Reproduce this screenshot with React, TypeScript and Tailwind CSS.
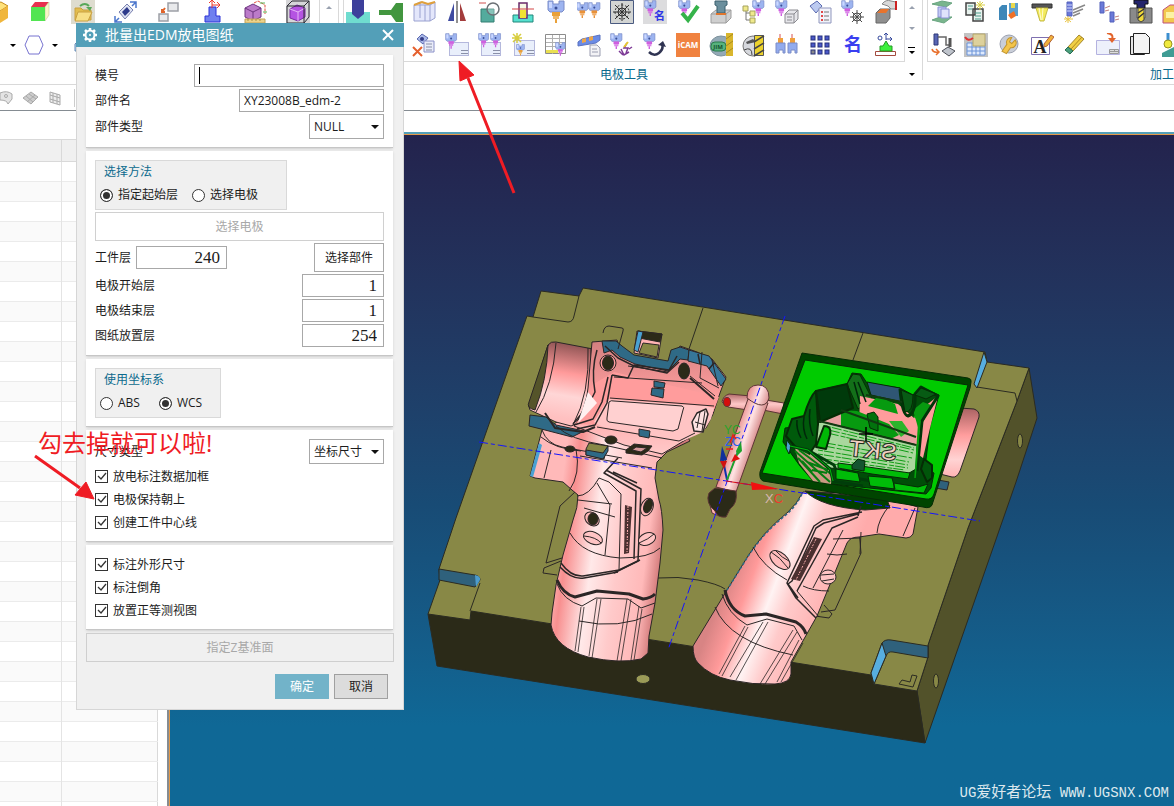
import React, { useState } from 'react';

type Draw = () => React.ReactNode;

interface ChuckProps {
    x?: number;
    y?: number;
    s?: number;
    tip?: string;
}

// Electrode holder, shared by most of the tool icons
const Chuck: React.FC<ChuckProps> = ({ x = 0, y = 0, s = 1, tip = '#cf5fe0' }) => (
    <g transform={`translate(${x} ${y}) scale(${s})`}>
        <path d="M1 1h5v3h6V1h5v9l-2 2H3l-2-2z" fill="#9db4f0" stroke="#7a8cc8" />
        <path d="M2 2h3v6H2z" fill="#cbd8ff" />
        <circle cx="9" cy="8" r="1.500" fill="#3b4f96" />
        <path d="M5 12h8v4H5z" fill={tip} />
        <path d="M6 16h6v3H6z" fill={tip} opacity=".75" />
        <path d="M8 19h2v4H8z" fill={tip} />
    </g>
);

const Sheet = ({ x = 8, y = 10, w = 15, h = 13 }) => (
    <g>
        <rect x={x + 0.5} y={y + 0.5} width={w - 1} height={h - 1} fill="#e9effb" stroke="#b4b8dc" />
        <path d={`M${x + w - 8} ${y + h - 5.5}h7M${x + w - 8} ${y + h - 2.5}h7`} stroke="#8a90a8" fill="none" />
    </g>
);

const leftIcons: Draw[] = [
    () => <><path d="M4 5l12-3 7 4-8 5z" fill="#ffe27a" stroke="#c58a1c" /><path d="M15 11l8-5v12l-8 5z" fill="#f0b63c" /><path d="M4 5l11 6v11L4 18z" fill="#ffcb4a" /></>,
    () => <><path d="M3 7l4-5h14l-4 5z" fill="#e8304f" /><path d="M17 7l4-5v13l-4 6z" fill="#f7f7c8" stroke="#b9b98a" strokeWidth=".5" /><path d="M3 7h14v14H3z" fill="#52e552" /></>,
    () => <><path d="M0 0h24v24H0z" fill="#dedccf" /><path d="M4 8h6l2 2h8v10H4z" fill="#e2bd4d" stroke="#c9a040" /><path d="M7 12h14l-4 9H4z" fill="#f7df86" stroke="#c9a040" /><path d="M9 6q5-4 9 0" stroke="#58a858" strokeWidth="2" fill="none" /><path d="M15 7h6l-2 4z" fill="#58a858" /></>,
    () => <><path d="M5 12l8-8 6 6-8 9z" fill="#dfe3f2" stroke="#7a82b0" /><path d="M8 12l5-5 3 4-5 5z" fill="#2d3a8a" /><path d="M16 2h6v6M22 2l-4 4M1 16v6h7M1 22l4-4" stroke="#4b76cc" strokeWidth="1.500" fill="none" /></>,
    () => <><path d="M11 3h10v8H11zM2 14h9v7H2z" fill="#e9eaec" stroke="#9da0a6" strokeWidth="1.500" /><path d="M8 8l-3 4M5 9v3h3" stroke="#e0642a" strokeWidth="2" fill="none" /></>,
    () => <><path d="M9 7h7v9h4v6H5v-6h4z" fill="#6f80ef" stroke="#2c32d8" /><path d="M12 8V1M12 5h8M9 3l3-3 3 3M17 2l3 3-3 3" stroke="#ee3a2a" fill="none" /></>,
    () => <><path d="M2 8l8-4 8 4v9l-8 4-8-4z" fill="#bb7bc9" stroke="#6d3480" /><path d="M2 8l8 4 8-4M10 12v9" stroke="#6d3480" fill="none" /><path d="M2 19h20v4H2z" fill="#ecd28a" stroke="#c0a358" /><path d="M5 19v2M9 19v2M13 19v2M17 19v2" stroke="#a89348" /><path d="M11 3l4-2 7 4v9" stroke="#e05040" fill="none" strokeDasharray="3 1" /><path d="M17 3h5M20 12h4" stroke="#59b959" /></>,
    () => <><path d="M0 0h24v24H0z" fill="#d6d6d8" /><path d="M4 9l7-4 8 3v9l-7 4-8-3z" fill="#b554e2" stroke="#7a2ba3" /><path d="M4 9l8 3 7-4M12 12v9" stroke="#e6b5f7" fill="none" /><path d="M1 6l5-5h17v16l-5 6H1zM1 6h17v17M18 6l5-5" stroke="#2b2b33" fill="none" /></>,
];

const toolIconsTop: Draw[] = [
    () => <><path d="M0 12h24v12H0z" fill="#6fdccf" /><path d="M6 0h12v14l-6 5-6-5z" fill="#3d3f9b" /></>,
    () => <><path d="M0 10h12l5-7h7v19h-7l-5-7H0z" fill="#42963f" /></>,
    () => <><path d="M2 5l6-3 8 2 7-2v16l-5 3H2z" fill="#e4e7fb" stroke="#9aa1d0" /><path d="M8 3v15M13 5v16M18 5v16M2 5h16l5-3" stroke="#9aa1d0" fill="none" /><path d="M2 5l8-3 6 2 7-2" stroke="#e0a03a" strokeWidth="2" fill="none" /></>,
    () => <><path d="M9 3v18H3z" fill="#3e4aa0" /><path d="M15 3v18h6z" fill="#a33c3c" /><path d="M12 1v22" stroke="#222" /></>,
    () => <><path d="M3 9h13v13H3z" fill="#53ab9d" stroke="#357e73" /><circle cx="15" cy="9" r="6" fill="#fff" fillOpacity=".3" stroke="#6b7075" strokeWidth="1.500" /><path d="M1 3h7" stroke="#d05050" /></>,
    () => <><path d="M2 15h20v7H2z" fill="#55e0cf" stroke="#23877a" /><path d="M8 3h8v15H8z" fill="#f8f9e4" stroke="#6a2a6a" strokeWidth="1.500" /><path d="M9 10h6v8H9z" fill="#f1e331" /><path d="M1 9h22" stroke="#d34545" /></>,
    () => <Chuck x={3} tip="#e9a13a" />,
    () => <><Chuck x={-1} y={2} s={0.7} tip="#e9923a" /><Chuck x={11} y={2} s={0.7} tip="#e9923a" /></>,
    () => <><path d="M.5.5h23v23H.5z" fill="#d2d4d3" stroke="#4a5a80" /><g stroke="#2e2e2e" fill="none"><circle cx="12" cy="12" r="4" /><circle cx="12" cy="12" r="7" strokeDasharray="2 2" /><path d="M12 3v18M3 12h18M5 5l14 14M19 5L5 19" /></g></>,
    () => <><path d="M0 0h24v24H0z" fill="#dcdcde" /><Chuck x={1} y={0} s={0.7} /><text x="11" y="20" fontSize="11" fontWeight="700" fill="#2f36e6">名</text></>,
    () => <><Chuck x={2} y={0} s={0.7} /><path d="M6 13l6 7L22 6" stroke="#35b34a" strokeWidth="4" fill="none" /></>,
    () => <><path d="M2 14l5-4h15v8l-5 5H2z" fill="#cfcfcf" stroke="#9d9d9d" /><path d="M2 14h15v9M17 14l5-4" stroke="#9d9d9d" fill="none" /><path d="M6 1h12v4l-2 1v7H8V6L6 5z" fill="#6b8f9d" stroke="#3d616e" /><path d="M7 14h10" stroke="#e0762d" strokeWidth="2" /></>,
    () => <><Chuck x={10} y={0} s={0.7} /><path d="M4 8v12M4 13h5M4 20h5" stroke="#777" fill="none" /><path d="M1 6h5v5H1zM8 11h5v5H8zM8 18h5v5H8z" fill="#efe98c" stroke="#a5a25c" /></>,
    () => <><Chuck x={0} y={0} s={0.7} /><path d="M10 14l4-4h9v9l-4 4h-9z" fill="#e6e6ea" stroke="#8b8b91" /><path d="M10 14h9v9M19 14l4-4M12 17h5M12 20h5" stroke="#8b8b91" fill="none" /></>,
    () => <><path d="M2 6l7-5 5 5-6 7z" fill="#bccaf0" stroke="#5c6bb0" /><path d="M11 8h12v15H11z" fill="#f2f3fa" stroke="#8f96bd" /><path d="M13 12h2M13 16h2M13 20h2" stroke="#e04848" strokeWidth="2" /><path d="M16 12h5M16 16h5M16 20h5" stroke="#777" /></>,
    () => <><Chuck x={0} y={0} s={0.7} /><g stroke="#4a4a4a" fill="none"><circle cx="16" cy="17" r="4" /><path d="M16 10v14M9 17h14M11 12l10 10M21 12L11 22" /></g></>,
    () => <><path d="M2 13l4-4h10v9l-4 5H2z" fill="#8f8f8f" stroke="#666" /><path d="M3 13l4-4h8l-3 4z" fill="#e8732c" /><path d="M8 4q4-5 9-3l5 1v7h-5l-3-3z" fill="#d9d9d9" stroke="#888" /><path d="M22 1v9" stroke="#c22" strokeWidth="2" /></>,
];

const toolIconsBottom: Draw[] = [
    () => null,
    () => null,
    () => <><path d="M5 6l5-5 6 4-5 6z" fill="#a9b8e8" stroke="#5c6bb0" /><circle cx="10" cy="6" r="2" fill="#333c86" /><path d="M12 8h10v11H12z" fill="#e9ecf8" stroke="#8a90c8" /><path d="M14 11h6M14 14h6M14 17h6" stroke="#8a90a8" /><path d="M1 14l9 9M10 14l-9 9" stroke="#e5602e" strokeWidth="2" /></>,
    () => <><Sheet x={4} y={9} w={20} h={14} /><Chuck x={0} y={0} s={0.68} /></>,
    () => <><Sheet x={3} y={9} w={20} h={14} /><Chuck x={0} y={0} s={0.62} /><Chuck x={12} y={0} s={0.62} /></>,
    () => <><Sheet x={3} y={7} w={21} h={16} /><Chuck x={5} y={11} s={0.5} tip="#e9a13a" /><path d="M6 0v10M1 5h10M2 1l8 8M10 1L2 9" stroke="#d7cd3e" strokeWidth="1.500" /></>,
    () => <><path d="M1.500 1.500h20v19h-20z" fill="#fff" stroke="#8c8c8c" /><path d="M2 5.500h19M2 9.500h19M2 13.500h19M8.500 2v19M15.500 2v19" stroke="#b0b0b0" /><path d="M2 17h12v3H2z" fill="#e9df51" /><Chuck x={11} y={9} s={0.6} /></>,
    () => <><path d="M1 9l4-3 18-4v5l-4 3L1 13z" fill="#6a8be6" stroke="#5a72c0" /><path d="M5 6l4-1v4l-4 1zM12 4l4-1v4l-4 1z" fill="#eda648" /><path d="M13 12h7l3 3v8H13z" fill="#f3f3f6" stroke="#9a9db0" /><path d="M15 16h5M15 19h6" stroke="#9a9db0" /></>,
    () => <><Chuck x={0} y={0} s={0.7} /><path d="M9 18l4 4M11 16l3 6 5-3M17 10l-3 5h4l-2 5M19 16l3-2" stroke="#7d3a96" strokeWidth="1.500" fill="none" /><path d="M18 9l-4 5" stroke="#e9c92e" strokeWidth="2" /></>,
    () => <><Chuck x={0} y={0} s={0.7} /><path d="M6 19q5 5 10 1t3-9" stroke="#303452" strokeWidth="2.500" fill="none" /><path d="M15 12l5-4 3 6z" fill="#303452" /></>,
    () => <><path d="M0 0h24v24H0z" fill="#f08240" /><text x="12" y="15" fontSize="8" fontWeight="700" fill="#fff" textAnchor="middle">iCAM</text></>,
    () => <><ellipse cx="12" cy="13" rx="11" ry="10" fill="#93a9b6" stroke="#7c919c" /><rect x="2" y="9" width="15" height="9" rx="4" fill="#57b27e" stroke="#2b7d4d" /><text x="9" y="16" fontSize="6" fontWeight="700" fill="#14532d" textAnchor="middle">JIM</text><path d="M17 0h7v23h-7z" fill="#d9b62d" /><path d="M17 6l7-5M17 13l7-5M17 20l7-5" stroke="#a98a1c" /></>,
    () => <><ellipse cx="11" cy="13" rx="10" ry="10" fill="#d6d8dd" stroke="#777" /><path d="M2 17q8-4 8 5" stroke="#444" fill="none" /><path d="M4 9l7-3 3 3-9 2z" fill="#555" /><path d="M12.500 2.500h9v20h-9z" fill="#ecd22c" stroke="#555" /><path d="M12 9l10-6M12 16l10-6M12 23l10-6" stroke="#444" strokeWidth="1.500" /></>,
    () => <><path d="M5 1v6M17 1v6" stroke="#d85050" /><path d="M3 5h5v5H3zM15 5h5v5h-5z" fill="#efa03c" /><path d="M1 10h9v10H8v-3H4v3H1zM13 10h9v10h-2v-3h-4v3h-3z" fill="#92abee" stroke="#7a8cc8" /></>,
    () => <><g fill="#4a58c8" stroke="#27307d">{[3, 10, 17].map((x) => [3, 10, 17].map((y) => <rect key={`${x}-${y}`} x={x} y={y} width="4" height="4" fill={x === 3 && y === 17 ? '#888' : '#4a58c8'} />))}</g></>,
    () => <text x="12" y="18" fontSize="18" fontWeight="700" fill="#3a3ff0" textAnchor="middle">名</text>,
    () => <><path d="M1.500 18.500h20v4h-20z" fill="#fff" stroke="#a34a3e" /><path d="M6 18v-5h3l3-5 3 5h3v5z" fill="#3cf03c" stroke="#249a24" /><path d="M12 7V1M12 6h6M10 2l2-2 2 2M16 4l2 2-2 2" stroke="#35499c" fill="none" /><circle cx="6" cy="5" r="2" fill="none" stroke="#35499c" /></>,
];

const camIconsTop: Draw[] = [
    () => <><path d="M1 4l10-3 10 2-6 4zM1 20l8-3h12l-8 6z" fill="#79b58d" stroke="#6aa581" /><path d="M7 7h8v10H7z" fill="#c3c9f5" stroke="#8a91d4" /><path d="M10 9h8v9h-8z" fill="#dfe2fb" stroke="#8a91d4" /></>,
    () => <><path d="M2 3h9v12H2zM9 9h10v12H9z" fill="#e8f2ee" stroke="#444" strokeWidth="1.500" /><path d="M4 6h5M4 9h4M11 13h6M11 16h6M11 19h6" stroke="#4b9a8a" /><path d="M16 1v9M12 5h9M13 2l6 6M19 2l-6 6" stroke="#d9cf45" /></>,
    () => <><path d="M2 8l3-3h5v15H2z" fill="#3e87b8" /><path d="M12 3h9v13h-9z" fill="#5b9fce" /><path d="M14 3h4v5h-4z" fill="#e9d84c" /><path d="M11 15l6-4 2 5-5 3z" fill="#f07026" /></>,
    () => <><path d="M2 4h20v4H2z" fill="#555" stroke="#333" /><path d="M6 8h12l-4 13h-4z" fill="#f3ea5c" stroke="#c5bb45" /><path d="M9 8l2 12M13 8l-1 12" stroke="#fffbd0" /></>,
    () => <><path d="M4 2h5v14H4z" fill="#6b79d8" stroke="#5260bb" /><path d="M4 5h5M4 8h5M4 11h5" stroke="#d3d9fb" /><path d="M10 10l12-5M10 13l10-4M10 16l7-3" stroke="#888" strokeWidth="1.500" /><path d="M5 16v7M1 19h9M2 17l6 5M8 17l-6 5" stroke="#e9c545" /></>,
    () => <><path d="M4 2h4v11H4zM14 12h4v10h-4z" fill="#6b79d8" stroke="#5260bb" /><path d="M9 8l5-2M9 11l4-1M19 17l4-1M19 20l4-1" stroke="#c08080" /></>,
    () => <><path d="M1 8h7v10h8V8h7v15H1z" fill="#8a8a8a" stroke="#555" /><path d="M5 0h14v4h-3v4H8V4H5z" fill="#23246c" stroke="#111" /><path d="M9 8h6v12l-3 2-3-2z" fill="#efd93a" stroke="#444" /><path d="M9 13l6-4M9 18l6-5" stroke="#333" strokeWidth="1.500" /></>,
    () => <><path d="M1 10l7-5h16v10l-8 8H1z" fill="#f2c84e" stroke="#c0507c" /><path d="M4 12h14v6H4z" fill="#fbf2a4" /></>,
];

const camIconsBottom: Draw[] = [
    () => <><path d="M3 1h4v11H3z" fill="#5866b4" stroke="#2f3978" /><path d="M7 4h8v8h5" stroke="#666" fill="none" strokeWidth="1.500" /><path d="M11 18l6-4 7 4-6 5z" fill="#bfc4cc" stroke="#4b4e56" /><path d="M19 5v9" stroke="#555" strokeWidth="3" /><path d="M1 16q1 4 6 3M5 16l3 3-3 3" stroke="#e8702d" strokeWidth="1.500" fill="none" /></>,
    () => <><path d="M0 0h24v24H0z" fill="#c3c3c3" /><path d="M3 10h18v12H3z" fill="#dfeafc" stroke="#6a93d8" /><path d="M3 14h18M3 18h18M8 10v12M12 10v12M16 10v12" stroke="#6a93d8" /><path d="M9 1h12v12H9z" fill="#ddd19c" stroke="#b5a66a" /><path d="M1 4q3 5 8 1" stroke="#d33" strokeWidth="2" fill="none" /></>,
    () => <><circle cx="12" cy="11" r="9" fill="#c9ced8" stroke="#9ca1b0" /><path d="M8 5a5 5 0 017 6l5 5-3 4-6-6a5 5 0 01-6-6l4 3 2-2z" fill="#f4c54a" stroke="#c3962f" transform="rotate(80 12 12)" /></>,
    () => <><path d="M1.500 4.500h18v17h-18z" fill="#fff" stroke="#7f70b0" /><text x="10" y="20" fontSize="18" fontWeight="700" fill="#222" textAnchor="middle" fontFamily="Liberation Serif">A</text><path d="M14 11l7-9 3 2-7 9-3 1z" fill="#f0b23a" stroke="#b3643a" /></>,
    () => <><path d="M5 14L16 2l5 4L10 18z" fill="#f0cf45" stroke="#a5872c" /><path d="M8 16L19 4" stroke="#b18b1f" /><path d="M5 14l5 4-3 3-5-4z" fill="#4aa07d" stroke="#266b50" /></>,
    () => <><path d="M.5 7.500h23v14H.5z" fill="#edf0fb" stroke="#b4b2e0" /><path d="M13.500 16.500h9v4h-9zM14 18.500h9M18.500 17v2" fill="#ddd" stroke="#999" /><path d="M11 0q7 1 5 6" stroke="#e2642c" strokeWidth="2" fill="none" /><path d="M12 5h8l-4 5z" fill="#e2642c" /></>,
    () => <><path d="M1.500 3.500h14v18h-14z" fill="#e5e5e5" stroke="#222" /><path d="M4.500.5h12l4 4v16h-16z" fill="#f4f4f4" stroke="#222" /></>,
    () => <><path d="M6 0v8" stroke="#3c8fd0" strokeWidth="3" /><circle cx="6" cy="11" r="4" fill="#f0ea3e" stroke="#999320" /><path d="M0 20l12-6V8l12-4v20H0z" fill="#3f9c94" /></>,
];

const IconButton: React.FC<{ draw: Draw; label: string }> = ({ draw, label }) => (
    <button type="button" aria-label={label} className="h-6 w-6 shrink-0">
        <svg viewBox="0 0 24 24" className="h-6 w-6">{draw()}</svg>
    </button>
);

const IconRow: React.FC<{ icons: Draw[]; name: string; wide?: boolean }> = ({ icons, name, wide }) => (
    <div className={`flex h-6 ${wide ? 'gap-[19px]' : 'gap-[9px]'}`}>
        {icons.map((draw, i) => <IconButton key={i} draw={draw} label={`${name} ${i + 1}`} />)}
    </div>
);

const Caret: React.FC<{ className?: string; up?: boolean }> = ({ className = 'h-[3px] w-[6px] text-black', up }) => (
    <svg viewBox="0 0 8 4" className={className}><path d={up ? 'M0 4h8L4 0z' : 'M0 0h8L4 4z'} fill="currentColor" /></svg>
);

const Ribbon = () => (
    <header className="flex h-[85px] overflow-hidden border-b border-[#d9d9d9]">
        <div className="flex w-[343px] shrink-0 flex-col">
            <div className="flex h-[62px] border-b border-[#d9d9d9]">
                <div className="w-[319px] shrink-0 overflow-hidden">
                    <div className="-ml-[15px]"><IconRow icons={leftIcons} name="View" wide /></div>
                    <div className="mt-[9px] flex h-6 items-center gap-2 pl-[10px]">
                        <Caret />
                        <svg viewBox="0 0 20 20" className="h-5 w-5"><path d="M5 1h10l4 9-4 9H5l-4-9z" fill="#fff" stroke="#7773d0" /></svg>
                        <Caret />
                        <svg viewBox="0 0 20 20" className="ml-2 h-5 w-5"><path d="M1 9l5-5h12v12H1z" fill="#b9d3ee" stroke="#6289b4" /></svg>
                    </div>
                </div>
                <div className="flex w-5 justify-center border-x border-[#d9d9d9] pt-[6px]"><Caret up className="h-[3px] w-[6px] text-gray-400" /></div>
            </div>
        </div>
        <div className="flex w-[562px] shrink-0 flex-col">
            <div className="flex h-[62px] flex-col gap-[9px] border-x border-b border-[#d9d9d9] pl-[2px]">
                <IconRow icons={toolIconsTop} name="Electrode" />
                <IconRow icons={toolIconsBottom} name="Electrode setup" />
            </div>
            <div className="pt-[4px] text-center text-[12px] leading-[18px] text-[#0b6a8d]">电极工具</div>
        </div>
        <div className="mb-1 flex w-[18px] shrink-0 flex-col items-center border-r border-[#d9d9d9] pr-[4px] pt-[6px]">
            <Caret up className="h-[3px] w-[6px] text-gray-400" />
            <Caret className="mt-[18px] h-[3px] w-[6px] text-gray-400" />
            <div className="mt-[17px] flex flex-col items-center gap-[3px]"><span className="h-px w-[7px] bg-black" /><Caret /></div>
            <Caret className="mt-[19px] h-[3px] w-[6px] text-black" />
        </div>
        <div className="ml-1 min-w-0 flex-1 overflow-hidden">
            <div className="flex h-[62px] flex-col gap-[9px] overflow-hidden border-b border-l border-[#d9d9d9] pl-[3px]">
                <IconRow icons={camIconsTop} name="Machining" />
                <IconRow icons={camIconsBottom} name="Machining setup" />
            </div>
            <div className="pt-[4px] text-right text-[12px] leading-[18px] text-[#0b6a8d]">加工</div>
        </div>
    </header>
);

const ViewBar = () => (
    <div className="flex h-[26px] items-center gap-2 border-b border-[#858c92]">
        <svg viewBox="0 0 66 16" className="h-4 w-[66px]" fill="#e4e4e4" stroke="#aaa">
            <path d="M0 3q7-3 12 1v5l-4 5q-1-4-8-4z" /><circle cx="6" cy="6" r="1.500" />
            <path d="M23 8l8-6 7 5-7 7z" fill="#ccc" /><path d="M26 6l7 6M29 4l7 5M35 5l-8 7" />
            <path d="M50 2l10 3v10l-10-3zM53 3v10M57 4v10M50 5l10 3M50 9l10 3" fill="#eee" />
        </svg>
        <span className="h-[18px] w-px bg-[#ccc]" />
    </div>
);

const LayerTable = () => (
    <table className="w-[158px] table-fixed border-collapse border-y border-r border-[#d9d9d9]">
        <thead>
            <tr className="h-[22px] border-b border-[#d9d9d9] bg-[#f0f0f0]">
                <th className="w-[61px] border-r border-[#d9d9d9]" /><th />
            </tr>
        </thead>
        <tbody>
            {Array.from({ length: 40 }, (_, i) => (
                <tr key={i} className="h-5 border-b border-[#ebebeb] even:bg-[#fafafa]">
                    <td className="border-r border-[#e4e4e4]" /><td />
                </tr>
            ))}
        </tbody>
    </table>
);

const Plate = () => (
    <g stroke="#2b2b22" strokeWidth="1">
        <path d="M1029 368L1037 418 1016 482 925 743 917 691 928 657 928 645 968 528 1017 401z" fill="#52522a" />
        <path d="M428 614L437 666 925 743 917 691 874 684 871 670 471 605z" fill="#2b2a18" />
        <path d="M541 291L579 296 583 288 985 352 987 362 1029 368 1017 401 968 528 928 645 928 657 917 691 874 684 871 675 471 611 470 620 428 614 440 580 439 569 456 518 527 316 533 317z" fill="#888846" />
        <path d="M533 317l35 5q5 0 6-6l5-20M703 308l-14 41M863 333l-10 27M977 387l38 6 2 8" fill="none" />
        <path d="M984 352l3 10-10 26-3-4z" fill="#57aee0" />
        <path d="M439 569l36 6q5 1 5 5l-5 7-36-7z" fill="#2f617c" />
        <path d="M475 575q6 1 5 5l-4 7z" fill="#4d9ccc" stroke="none" />
        <path d="M480 583l-10 28" fill="none" />
        <path d="M882 643q3-4 9-3l37 6v12l-35-6q-5-1-7 4l-12 28-3-11z" fill="#2f617c" />
        <path d="M882 643l4 13-12 28-3-11z" fill="#57aee0" />
        <path d="M899 684l3-4 8 2 2-7 5 1-4 11z" fill="none" />
        <ellipse cx="1020" cy="441" rx="2.500" ry="7" fill="#888846" />
        <ellipse cx="936" cy="681" rx="2.500" ry="7" fill="#888846" />
        <ellipse cx="643" cy="679" rx="7" ry="4.500" fill="#9b9b57" />
        <path d="M658 578q20-2 40 2t27 9" fill="none" />
    </g>
);

const LeftGun = () => (
    <g stroke="#2b2626" strokeWidth="1" strokeLinejoin="round">
        <path d="M575 492l-15 14-14 57 16-5M544 568l17-7M544 568l-1 5 14 2" fill="none" />
        {/* grip and base */}
        <path d="M542 430L530 476 535 478 563 482 572 490 578 495Q578 508 573 520L563 555 556 585 552 613 551 625Q555 648 588 657 620 664 641 659L648 653 649 636 655 603 660 563 663 530Q662 508 659 500L655 478 657 462 667 452 690 441 670 410 600 400z" fill="url(#grip)" />
        {/* barrel */}
        <path d="M548 345q3-4 8-3l37 7-5 60q-8 15-17 17l-15-4-26-12q-2-3 0-7z" fill="url(#barrel)" />
        <path d="M548 345q-1 35-13 65-9-2-6-8z" fill="#55542a" />
        <path d="M556 343q-3 42-20 69M588 348q2 45-15 77M591 349q3 45-16 77" fill="none" />
        {/* slide */}
        <path d="M592 342l25-2 4 12 16 8 32 5 5-8 6-11 17 6 15 7 14 18-6 16-7 21-7 14-24 14-20 12-38-9-50-19q12-14 14-38z" fill="url(#slide)" />
        <path d="M592 385l22-13 105 25-7 18-101-10-15 20-21-1q16-16 17-39z" fill="#ff9c9c" stroke="none" />
        <path d="M608 399l98 7 8 2-3 11-8 13-20 9-80-14-9-5z" fill="#ffc4c4" stroke="none" />
        <path d="M610 398l104 8M614 377l88 6M597 427l82 14 16-8" fill="none" />
        <path d="M602 341L616 341 622 346 634 355 668 361 671 350 680 347 689 350 688 360 680 359 668 371 635 364 620 357 612 350 604 353z" fill="#2f6a86" />
        <path d="M689 350L709 356 726 379 721 386 707 366 688 361z" fill="#36779a" />
        <path d="M605 346L618 358 634 366 667 373 679 362M698 354l2 10M714 363l-5 6" fill="none" strokeWidth="1.500" />
        <path d="M603 333q1-7 6-7l13 2q2 0 1 3l-5 18" fill="none" />
        <path d="M637 331L662 334 658 358 634 353z" fill="#ffb4b4" />
        <path d="M638 331L662 334 660 342 639 338z" fill="#2b2a18" />
        <path d="M638 331l5 1-5 20-4-2z" fill="#4aa1d2" />
        <path d="M643 343l16 2-2 12-18-4z" fill="#888846" />
        <path d="M597 350q-6 20-2 42l-7 14-15 18M612 375l16 3 6-13 35 5 8-14M612 375l-5 28-12 22-18 4M608 377l-6 25-9 17-19 6" fill="none" strokeWidth="1.500" />
        <path d="M588 392l9 11-12 13-7 7z" fill="#fff0f0" stroke="none" />
        <path d="M609 402q2-2 5-1l68 5q3 1 1 4l-5 19-5 2-64-9q-3-1-2-4z" fill="#ffd0d0" />
        <circle cx="608" cy="363" r="8" fill="#ff9c9c" /><ellipse cx="608" cy="363" rx="5.500" ry="7" fill="#2b2a18" />
        <ellipse cx="684" cy="371" rx="5.500" ry="8" fill="#2b2a18" />
        <path d="M702 352l-2 26 19 10M690 376l25 20M712 360l6 26M628 366l40 6" fill="none" />
        <path d="M690 378l24 21" fill="none" strokeWidth="2" />
        <path d="M654 381l11 2-1 5-10-1zM652 388l12 1-1 9-12-3z" fill="#2f6a86" />
        <path d="M639 429l11 2-1 7-10-2z" fill="#2f6a86" />
        <path d="M697 413l9-4 2 5-5 18-9-1-2-9z" fill="#ffe2e2" strokeWidth="1.500" />
        <path d="M700 412l-3 16M705 411l-3 20M695 422l10 3" fill="none" />
        {/* trigger guard */}
        <path d="M530 415l16 2 10 8 28 6-12 6-27-7-16-4z" fill="#2f6a86" />
        <path d="M545 413l10 15 28 4 12-5" fill="none" strokeWidth="2" />
        <path d="M539 443l3 2-9 32-3-1z" fill="#4aa1d2" stroke="none" />
        <path d="M556 426q15 14 48 19l58 13M542 430q5 14 20 17l60 11M551 450l-7 28M576 449q5 25-7 42M580 456l72 12M541 437q14 12 40 14" fill="none" />
        <path d="M586 449l3-6 19 3-3 9-1 4-18-4z" fill="#888846" />
        <path d="M586 450l17 3 5-7v5l-5 8-17-4z" fill="#2f6a86" />
        <ellipse cx="611" cy="440" rx="6" ry="4" fill="#2b2a18" /><ellipse cx="570" cy="449" rx="5" ry="3" fill="#2b2a18" />
        <path d="M626 450l8-6 18 2-4 5-6 4-16-2z" fill="#2b2a18" /><path d="M632 450l4-3 11 1-6 4z" fill="#d59a9a" />
        <path d="M618 458l-14 15 32 18-2 68M606 470l35 19-3 72-24 12M613 472l24 11" fill="none" strokeWidth="1.500" />
        <path d="M577 496q12 0 22-18l10 4 12 12-2 76M597 483l13 22-5 50M578 500l34 4M584 508l31 9" fill="none" />
        <path d="M625 505l7 2-3 46-5 1z" fill="#4b3030" stroke="none" /><path d="M628 506l-1 47" stroke="#ffb0b0" strokeDasharray="2 1 1 2" />
        <ellipse cx="592" cy="519" rx="8" ry="6" fill="#ffb5b5" transform="rotate(40 592 519)" /><ellipse cx="593" cy="519" rx="5" ry="6" fill="#2b2a18" />
        <ellipse cx="647" cy="507" rx="6" ry="9" fill="#ffb5b5" transform="rotate(20 647 507)" /><ellipse cx="648" cy="506" rx="4" ry="7" fill="#2b2a18" transform="rotate(20 648 506)" />
        <ellipse cx="593" cy="538" rx="10" ry="6" fill="#ffc4c4" transform="rotate(22 593 538)" /><path d="M584 536q12 1 17 7" fill="none" />
        <ellipse cx="647" cy="539" rx="9" ry="6" fill="#ffc4c4" transform="rotate(-22 647 539)" /><path d="M639 543q10-4 15-9" fill="none" />
        <path d="M570 533q12 22 50 25 30 0 40-10" fill="none" />
        <path d="M561 563q10 14 22 13l36-6 21-10M560 567q12 13 24 11l34-6" fill="none" strokeWidth="1.500" />
        <path d="M557 580q6 14 18 17l22-6 32 3 14 5q8-1 12-5" fill="none" strokeWidth="3" />
        <path d="M557 584q6 16 25 22l14-8 32 1 13 9 14-5M579 621q40 9 73-7" fill="none" />
        <path d="M581 607l-6 44M584 607l-6 45M597 599l-8 57M601 599l-9 59M627 599l-10 62M631 599l-10 62M639 606l-8 54M642 609l-8 51" fill="none" strokeWidth=".8" />
    </g>
);

const Rod = () => (
    <g stroke="#5c3535" strokeWidth="1">
        <path d="M729 394q-6 2-7 8l6 5 20 3 3-14zM766 400l18 3-1 11-20-4z" fill="url(#bar)" />
        <ellipse cx="727" cy="402" rx="3.500" ry="4.500" fill="#d40d0d" />
        <path d="M748 399l-32 88 20 5 32-89z" fill="url(#rod)" />
        <path d="M747 398q0-13 11-13t11 13q-4 14-22 0z" fill="url(#rod)" />
        <path d="M710 505l2 8q8 5 13-1l2-10z" fill="#ffb0b0" />
        <path d="M715 488l21 3q2 12-6 18l-4 8q-9 1-11-6-10-8-6-18z" fill="#2b2a18" />
    </g>
);

const RightGun = () => (
    <g stroke="#2b2626" strokeWidth="1" strokeLinejoin="round">
        <path d="M858 518l3 35-26 57-14 2M824 605l8 9-3 4-14-2" fill="none" />
        <path d="M945 407l29 2q6 2 5 8l-19 54q-3 7-8 6l-16-4z" fill="url(#cyl)" />
        <path d="M938 480l11 2-2 8-12-2z" fill="#2f617c" />
        <path d="M803 492q-6 12-15 20-25 20-40 44l-21 34-34 56q0 12 5 17 12 13 32 17 23 5 45 4 15-1 16-10v-12l26-46 30-73q3-6 12-6l20-3 27 4q5 0 7-4l5-27-50-14z" fill="url(#grip2)" />
        <path d="M805 491q16 16 60 19l25-2-3-9z" fill="#003f00" />
        <path d="M802 494q-6 12-15 20-25 20-40 44l-20 32" stroke="#2f6a86" strokeWidth="1.500" strokeDasharray="3 2" fill="none" />
        <path d="M862 512l-39 8-9 6-27 57 9 15 20 20M858 514l-34 9-8 5-24 53-4 3 10 14M858 517l-26 11-5 9-30 54M861 506l-3 10" fill="none" strokeWidth="1.500" />
        <path d="M814 537l8 2-22 42-9-2z" fill="#4b3030" stroke="none" /><path d="M816 539l-20 41" stroke="#ffb0b0" strokeDasharray="2 1 1 2" />
        <path d="M843 530l-30 58M833 539l27-1M827 554q10 2 20 0M753 547q10 20 34 33M803 586q10 5 26 5M861 532l-1 22M890 505q-12 14-13 28M915 508l-12 28M797 591l22 26" fill="none" />
        <ellipse cx="780" cy="560" rx="12" ry="7" fill="#ffbcbc" transform="rotate(42 780 560)" /><path d="M771 552q9 5 17 16M776 551q6 7 13 10" fill="none" />
        <ellipse cx="828" cy="577" rx="8" ry="7" fill="#ffc4c4" /><path d="M821 575l13-1M822 581l12-2" fill="none" />
        <path d="M725 590q4 20 20 26l21-2 30 8q8 5 10 12" fill="none" strokeWidth="3" />
        <path d="M722 594q6 20 25 31l20-6 27 7 8 14M715 607q14 35 78 48" fill="none" />
        <path d="M745 626l-26 48M748 627l-26 49M763 622l-33 55M768 622l-32 58M793 630l-33 54M797 632l-32 52M799 640l-22 42M803 643l-22 39" fill="none" strokeWidth=".8" />
    </g>
);

const Electrode = () => (
    <g stroke="#052b05" strokeWidth="1" strokeLinejoin="round">
        <path d="M802 353l166 25q4 1 3 4l-1 6-38 117q-2 4-9 2l-160-26q-4-2-3-9z" fill="#004400" />
        <path d="M805 360l163 25-34 109q-2 6-8 5l-164-26z" fill="#00cb00" />
        <path d="M815 391l32-7 5-11 9 1 6 9 33 5 13 7 8-8 18 8-9 31-5 42 9 5-3 15-5 6-66-7-46-5-14-16-17-24 2-14 16-2 8-5z" fill="#004d08" />
        <path d="M853 374l7 1 12 24-14 10-11-25z" fill="#137019" />
        <path d="M867 382l33 6 2 14-31-7z" fill="#2f5674" />
        <path d="M860 396l38 8 16 14 6-8 18-14-8 32-7 30-24-18-40-12z" fill="#ff9c9c" stroke="none" />
        <path d="M819 421l23-11 30 12 44 15-2 26-94-20z" fill="#e9a2a2" stroke="none" />
        <path d="M841 410l16 1 32 13 10 11-15 7-43-13zM878 396l17 8 3 10-30-8zM913 410l10-8 8 3-12 26zM905 443l11 2-1 15-12-1z" fill="#079a10" stroke="none" />
        <path d="M889 421l13 0 7 10-8 6z" fill="#2cb42c" stroke="none" />
        <path d="M819 421l98 24-1 24-12 7-83-9-13-8z" fill="#a9d79d" />
        <g stroke="#0e9b14" strokeWidth="1" fill="none" strokeDasharray="5 1 10 2">
            <path d="M826 426l88 22M824 429l90 21M823 432l90 21M820 442l92 16M819 445l90 17M818 450l90 15M818 454l90 14M816 458l89 12M824 463l80 10" />
        </g>
        <path d="M792 419l12-3q6-20 12-25l2 33-2 20-10 15-20-23z" fill="#005a0b" strokeWidth="2" />
        <path d="M816 391l31-7 6 24-33 14z" fill="#003a0b" strokeWidth="2" />
        <path d="M804 417q-2 12 3 22M810 409q-2 15 3 27M797 420q-1 9 4 18M858 382l8 20M854 382l6 22" stroke="#00270a" fill="none" strokeWidth="1.500" />
        <path d="M816 447l8-21q8 0 6 9l-4 14z" fill="#00b806" strokeWidth="2" />
        <path d="M787 440l4 6-2 8-3-6z" fill="#4da0cf" />
        <path d="M795 448l17 8 20 16-1 12-18-3-14-18z" fill="#c99a82" stroke="none" />
        <path d="M795 451l35 31M799 450l32 24M798 458l22 24M807 462l21 8M812 470l15 3M802 461l10 11" stroke="#047d10" strokeWidth="2" fill="none" />
        <path d="M790 446l18 4 22 19 3 12 30 5M806 449l28 16 4 10 28 5 50 9" stroke="#003d0a" strokeWidth="3" fill="none" />
        <path d="M790 446l18 4 22 19 3 12" stroke="#00b90b" strokeWidth="1" fill="none" />
        <path d="M836 469l22 4 2 9-24-3zM868 476l24 2 3 11-25-3zM894 483l24 4 10-3-4 9-30-3zM838 463l30 4 42 6-2 6-36-5-34-6z" fill="#00bc08" />
        <path d="M900 389q2 26 8 27 8-3 7-22l6-7 17 9-16 25-5 50" stroke="#003508" strokeWidth="3" fill="none" />
        <path d="M901 390l12 5q0 18-8 17zM915 395l6-7 15 6-10 5z" fill="#075b14" />
        <path d="M914 416l6 5-5 57M919 420l-4 58" fill="none" stroke="#04a30c" strokeWidth="1.500" />
        <path d="M924 459l8 6v13l-5 4-6-13z" fill="#00560a" strokeWidth="2" />
        <path d="M867 414l7-2 4 5v14l-8-3z" fill="#02720d" />
        <path d="M852 465l6-6 7 2-1 10-12-2z" fill="#14542f" />
        <path d="M819 421l97 24M841 410l75 27M866 395l36 7" stroke="#113a11" strokeWidth="2" fill="none" />
        <text transform="translate(896 461) scale(-1 1) rotate(-6)" fontFamily="Liberation Sans" fontWeight="700" fontSize="24" fill="#f3cfc4" stroke="#1a301a">SKT</text>
    </g>
);

const MoldModel = () => (
    <svg viewBox="170 135 1004 671" className="absolute left-0 top-0 h-[671px] w-[1004px]" aria-label="Mold model">
        <defs>
            <linearGradient id="grip" gradientUnits="userSpaceOnUse" x1="552" y1="560" x2="660" y2="574">
                <stop offset="0" stopColor="#ffb9b9" /><stop offset=".12" stopColor="#f88f8f" /><stop offset=".36" stopColor="#ffe9e9" /><stop offset=".6" stopColor="#ffcaca" /><stop offset=".85" stopColor="#ffb9b9" /><stop offset="1" stopColor="#d17878" />
            </linearGradient>
            <linearGradient id="grip2" gradientUnits="userSpaceOnUse" x1="728" y1="577" x2="832" y2="616">
                <stop offset="0" stopColor="#d88484" /><stop offset=".2" stopColor="#ff9a9a" /><stop offset=".42" stopColor="#fff3f3" /><stop offset=".6" stopColor="#ffcaca" /><stop offset="1" stopColor="#ffabab" />
            </linearGradient>
            <linearGradient id="barrel" gradientUnits="userSpaceOnUse" x1="572" y1="343" x2="560" y2="418">
                <stop offset="0" stopColor="#8c5252" /><stop offset=".4" stopColor="#ff9a9a" /><stop offset=".7" stopColor="#ffd6d6" /><stop offset="1" stopColor="#ffc0c0" />
            </linearGradient>
            <linearGradient id="slide" x1="0" y1="0" x2="0" y2="1">
                <stop offset="0" stopColor="#d37f7f" /><stop offset=".5" stopColor="#ff9f9f" /><stop offset="1" stopColor="#ffc9c9" />
            </linearGradient>
            <linearGradient id="rod" gradientUnits="userSpaceOnUse" x1="731" y1="440" x2="755" y2="448">
                <stop offset="0" stopColor="#e88787" /><stop offset=".5" stopColor="#ffe3e3" /><stop offset="1" stopColor="#d07c7c" />
            </linearGradient>
            <linearGradient id="bar" x1="0" y1="0" x2="0" y2="1">
                <stop offset="0" stopColor="#b36a6a" /><stop offset=".5" stopColor="#ffc8c8" /><stop offset="1" stopColor="#d98585" />
            </linearGradient>
            <linearGradient id="cyl" x1="0" y1="0" x2="0" y2="1">
                <stop offset="0" stopColor="#a66060" /><stop offset=".4" stopColor="#ff9d9d" /><stop offset=".75" stopColor="#ffd3d3" /><stop offset="1" stopColor="#ffb3b3" />
            </linearGradient>
        </defs>
        <Plate />
        <LeftGun />
        <Rod />
        <RightGun />
        <Electrode />
        <path d="M479 442l501 79M785 316L668 650" stroke="#1414ff" strokeDasharray="9 3 4 3" fill="none" />
        <path d="M726 481l26 4" stroke="#e01010" /><path d="M751 482l28 7-27 1z" fill="#f01010" />
        <path d="M727 480l-4-20" stroke="#1030b0" strokeWidth="2" /><path d="M722 446l5 14-7 1z" fill="#10309b" /><path d="M720 461h7l-3 8z" fill="#d01010" />
        <path d="M727 480l10-26" stroke="#1fa32c" strokeWidth="2" /><path d="M741 441l1 10-5 5-1-5z" fill="#1fa32c" /><path d="M735 454l5 5-9 3z" fill="#e01010" />
        <g fontFamily="Liberation Sans" fontSize="12">
            <text x="724" y="434" fill="#2ba32b">YC</text>
            <text x="725" y="446" fill="#2a5cf0">ZC</text>
            <text x="765" y="503" fontSize="13" fill="#d9b6b0">X<tspan fill="#ee3a2e">C</tspan></text>
        </g>
        <path d="M726 449h7M730 443l3-8 3 4" stroke="#ee1c1c" fill="none" strokeWidth="1.500" />
        <path d="M866 427v14M859 434h14" stroke="#000" strokeWidth="1.500" />
    </svg>
);

const Group: React.FC<{ children: React.ReactNode }> = ({ children }) => (
    <section className="mr-[10px] mb-[3px] flex flex-col gap-[2px] border-b border-[#c6c6c6] bg-white px-[9px] pt-[9px] pb-[8px] shadow-sm">
        {children}
    </section>
);

const fieldClass = 'h-[23px] border border-[#a8a8a8] bg-white outline-none';

const DropDown: React.FC<{ id: string; value: string }> = ({ id, value }) => (
    <div className="relative w-[75px]">
        <select id={id} className="h-[25px] w-full appearance-none border border-[#a8a8a8] bg-white pl-1 outline-none">
            <option>{value}</option>
        </select>
        <Caret className="pointer-events-none absolute top-[11px] right-[5px] h-1 w-2 text-[#111]" />
    </div>
);

const NumberRow: React.FC<{ id: string; label: string; value: string }> = ({ id, label, value }) => (
    <div className="flex items-center justify-between">
        <label htmlFor={id}>{label}</label>
        <input id={id} defaultValue={value} className={`${fieldClass} w-[82px] pr-[6px] text-right font-['Liberation_Serif'] text-[17px]`} />
    </div>
);

const CheckRow: React.FC<{ label: string }> = ({ label }) => {
    const [checked, setChecked] = useState(true);

    return (
        <label className="flex h-[21px] items-center gap-[5px]">
            <span className="relative h-[13px] w-[13px]">
                <input type="checkbox" checked={checked} onChange={() => setChecked(!checked)} className="block h-[13px] w-[13px] appearance-none border border-[#333] bg-white" />
                {checked && <svg viewBox="0 0 13 13" className="pointer-events-none absolute inset-0"><path d="M3 6l3 3 5-6" fill="none" stroke="#333" strokeWidth="1.300" /></svg>}
            </span>
            {label}
        </label>
    );
};

const RadioBox: React.FC<{ title: string; name: string; options: string[]; selected: number; className: string; rowClass: string }> = ({ title, name, options, selected, className, rowClass }) => (
    <fieldset className={`h-[50px] border border-[#d9d9d9] bg-[#f0f0f0] px-1 ${className}`}>
        <legend className="float-left w-full pt-[2px] pl-1 leading-[18px] text-[#0b6a8d]">{title}</legend>
        <div className={`clear-both flex pt-[4px] ${rowClass}`}>
            {options.map((option, i) => (
                <label key={option} className="flex items-center gap-[5px] leading-[20px]">
                    <input type="radio" name={name} defaultChecked={i === selected} className="h-[13px] w-[13px] appearance-none rounded-full border border-[#333] bg-white checked:bg-[#333] checked:shadow-[inset_0_0_0_2px_white]" />
                    {option}
                </label>
            ))}
        </div>
    </fieldset>
);

const EdmDialog = () => (
    <div role="dialog" aria-labelledby="dialog-title" className="absolute top-[23px] left-[76px] w-[328px] bg-[#f0f0f0] text-[12px] text-[#1c1c1c]">
        <div className="flex h-6 items-center bg-[#539fb8] pr-2 pl-[6px] text-white">
            <svg viewBox="0 0 16 16" className="h-4 w-4" fill="none" stroke="currentColor">
                <circle cx="8" cy="8" r="4.500" strokeWidth="2" />
                <path d="M8 1v2M8 13v2M1 8h2M13 8h2M3 3l1.500 1.500M11.500 11.500L13 13M13 3l-1.500 1.500M4.500 11.500L3 13" strokeWidth="2.500" />
                <circle cx="8" cy="8" r="1" fill="currentColor" stroke="none" />
            </svg>
            <h1 id="dialog-title" className="ml-[7px] flex-1 text-[14px] leading-6">批量出EDM放电图纸</h1>
            <button type="button" aria-label="Close">
                <svg viewBox="0 0 16 16" className="h-4 w-4"><path d="M3 3l10 10M13 3L3 13" stroke="currentColor" strokeWidth="2" /></svg>
            </button>
        </div>
        <div className="border-x border-b border-[#d6d6d6] pt-2 pb-[10px] pl-[9px]">
            <Group>
                <div className="flex items-center justify-between">
                    <label htmlFor="mold-no">模号</label>
                    <div className="relative w-[190px]">
                        <input id="mold-no" className={`${fieldClass} block w-full px-1`} />
                        <span className="absolute top-[3px] left-[5px] h-[17px] w-px bg-black" />
                    </div>
                </div>
                <div className="flex items-center justify-between">
                    <label htmlFor="part-name">部件名</label>
                    <input id="part-name" defaultValue="XY23008B_edm-2" className={`${fieldClass} w-[145px] px-1`} />
                </div>
                <div className="flex items-center justify-between">
                    <label htmlFor="part-type">部件类型</label>
                    <DropDown id="part-type" value="NULL" />
                </div>
            </Group>
            <Group>
                <RadioBox title="选择方法" name="method" options={['指定起始层', '选择电极']} selected={0} className="w-[192px]" rowClass="gap-[14px]" />
                <button type="button" disabled className="h-[29px] border border-[#d0d0d0] text-[#a8a8a8]">选择电极</button>
                <div className="flex h-[29px] items-center">
                    <label htmlFor="work-layer">工件层</label>
                    <input id="work-layer" defaultValue="240" className={`${fieldClass} ml-[5px] w-[91px] pr-[6px] text-right font-['Liberation_Serif'] text-[17px]`} />
                    <button type="button" className="ml-auto h-[29px] w-[70px] border border-[#a8a8a8]">选择部件</button>
                </div>
                <NumberRow id="start-layer" label="电极开始层" value="1" />
                <NumberRow id="end-layer" label="电极结束层" value="1" />
                <NumberRow id="sheet-layer" label="图纸放置层" value="254" />
            </Group>
            <Group>
                <RadioBox title="使用坐标系" name="csys" options={['ABS', 'WCS']} selected={1} className="w-[126px]" rowClass="gap-[19px]" />
            </Group>
            <Group>
                <div className="flex items-center justify-between">
                    <label htmlFor="dim-type">尺寸类型</label>
                    <DropDown id="dim-type" value="坐标尺寸" />
                </div>
                <CheckRow label="放电标注数据加框" />
                <CheckRow label="电极保持朝上" />
                <CheckRow label="创建工件中心线" />
            </Group>
            <Group>
                <CheckRow label="标注外形尺寸" />
                <CheckRow label="标注倒角" />
                <CheckRow label="放置正等测视图" />
            </Group>
            <div className="pr-[9px]">
                <button type="button" disabled className="h-[29px] w-full border border-[#cfcfcf] text-[#a8a8a8]">指定Z基准面</button>
            </div>
            <div className="mt-3 flex justify-end gap-[5px] pr-[15px]">
                <button type="button" className="h-[25px] w-[54px] bg-[#72b3c9] text-white">确定</button>
                <button type="button" className="h-[25px] w-[54px] border border-[#a0a0a0] bg-[#dcdcdc]">取消</button>
            </div>
        </div>
    </div>
);

// Red notes drawn over everything else
const Notes = () => (
    <>
        <p className="pointer-events-none absolute top-[427px] left-[38px] text-[24px] leading-8 whitespace-nowrap text-[#ef1c24]">勾去掉就可以啦!</p>
        <svg viewBox="0 0 530 520" className="pointer-events-none absolute top-0 left-0 h-[520px] w-[530px]" fill="#ef1c24" stroke="#ef1c24">
            <path d="M35 456l45 32M514 193L468 78" strokeWidth="3" />
            <path d="M94 499l-19-4 11-13zM459 61l15 14-14 6z" strokeWidth="1" />
        </svg>
    </>
);

const App = () => (
    <div className="relative flex h-screen flex-col overflow-hidden bg-white font-['Open_Sans','Noto_Sans_CJK_SC',sans-serif]">
        <Ribbon />
        <ViewBar />
        <main className="flex min-h-0 flex-1">
            <aside className="w-[167px] shrink-0 overflow-hidden pt-[28px]">
                <LayerTable />
            </aside>
            <div className="flex min-w-0 flex-1 flex-col pt-[21px]">
                <div className="relative flex-1 overflow-hidden border-t-2 border-l-2 border-t-[#539fb8] border-l-[#858c92]">
                    <div className="absolute inset-0 overflow-hidden border-t border-l border-[#e59a48] bg-linear-to-b from-[#23234d] via-[#184b75] via-55% to-[#0f6896] to-88%">
                        <MoldModel />
                    </div>
                    <p className="absolute right-[5px] bottom-[2px] font-['Liberation_Mono','Noto_Sans_CJK_SC',monospace] text-[14px] leading-5 text-[#dde8ee]">
                        UG<span className="text-[15px]">爱好者论坛</span> WWW.UGSNX.COM
                    </p>
                </div>
            </div>
        </main>
        <EdmDialog />
        <Notes />
    </div>
);

export default App;
